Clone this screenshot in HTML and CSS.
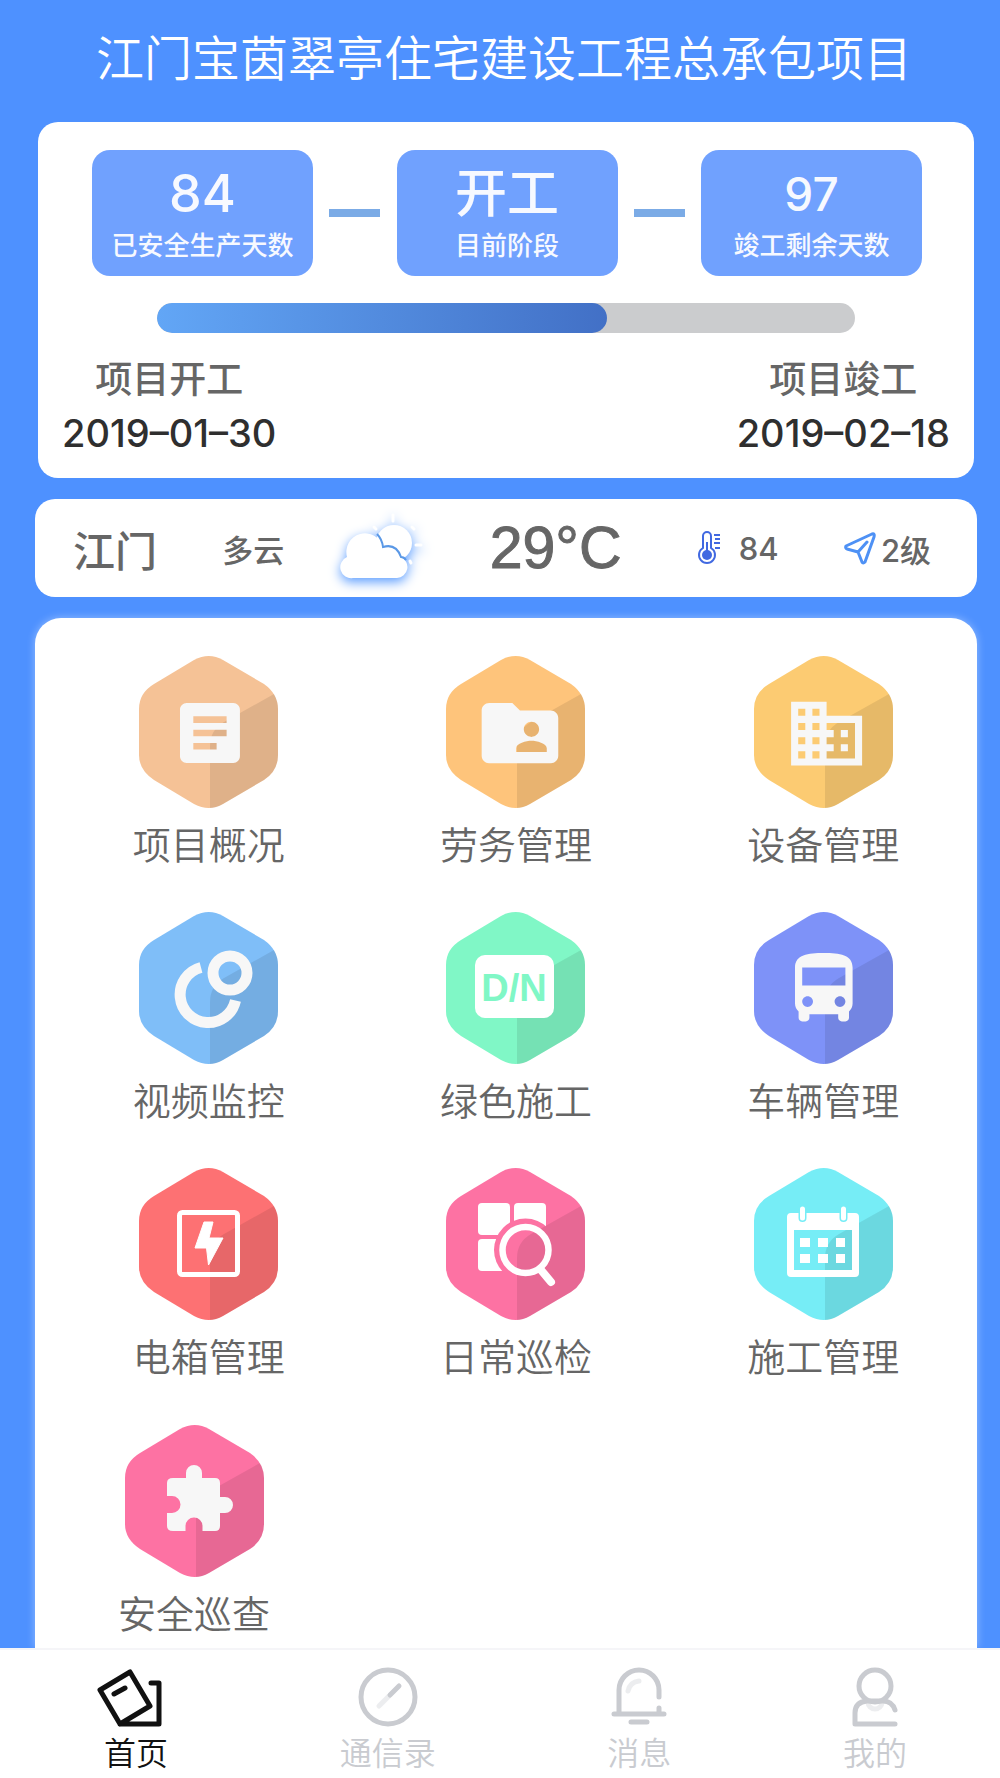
FILE: index.html
```html
<!DOCTYPE html>
<html lang="zh-CN">
<head>
    <meta charset="UTF-8">
    <meta name="viewport" content="width=device-width, initial-scale=1.0">
    <title>江门宝茵翠亭住宅建设工程总承包项目</title>
    <link rel="stylesheet" href="styles.css">
</head>
<body>
    <!-- shared hexagon background for the menu icons -->
    <svg class="defs" width="0" height="0" aria-hidden="true">
        <symbol id="hex" viewBox="0 0 139 152">
            <path fill="currentColor" d="M55 4Q70-4 84 4L125 28Q139 38 139 53V99Q139 115 125 124L84 148Q70 156 55 148L15 124Q0 114 0 99V53Q0 37 15 28Z"/>
            <path fill="#000" fill-opacity=".085" d="M71 152V90Q71 74 85 66L135 38Q139 45 139 53V99Q139 115 125 124L84 148Q78 152 71 152Z"/>
        </symbol>
    </svg>

    <header class="header">
        <h1>江门宝茵翠亭住宅建设工程总承包项目</h1>
    </header>

    <main class="main">
        <section class="card project">
            <div class="stats">
                <div class="stat">
                    <span class="stat-value">84</span>
                    <span class="stat-label">已安全生产天数</span>
                </div>
                <span class="dash"></span>
                <div class="stat">
                    <span class="stat-value">开工</span>
                    <span class="stat-label">目前阶段</span>
                </div>
                <span class="dash"></span>
                <div class="stat">
                    <span class="stat-value small">97</span>
                    <span class="stat-label">竣工剩余天数</span>
                </div>
            </div>
            <progress class="progress" value="64.5" max="100" aria-label="项目进度"></progress>
            <div class="dates">
                <div class="date">
                    <span class="date-label">项目开工</span>
                    <time class="date-value" datetime="2019-01-30">2019–01–30</time>
                </div>
                <div class="date">
                    <span class="date-label">项目竣工</span>
                    <time class="date-value" datetime="2019-02-18">2019–02–18</time>
                </div>
            </div>
        </section>

        <section class="card weather">
            <span class="city">江门</span>
            <span class="sky">多云</span>
            <svg class="cloud" viewBox="13 0 75 72" aria-hidden="true">
                <g class="cloud-shape">
                    <circle cx="58" cy="31" r="18"/>
                    <path class="rays" d="M57 3V9M38 15L40 17M76 15L78 17M80 33H85M74 49L75 51"/>
                    <path d="M17 66A11 11 0 0 1 11 45A18 18 0 0 1 47 35Q60 31 65 45A11 11 0 0 1 61 66Z"/>
                    <path class="edge" d="M41 22Q46 27 47 35Q60 31 65 45Q68 45 70 48"/>
                </g>
            </svg>
            <span class="temp">29°C</span>
            <span class="humidity">
                <svg class="thermo" viewBox="0 0 24 36" aria-hidden="true">
                    <path fill="none" stroke="#4169e1" stroke-width="2" d="M6 18V6a4 4 0 0 1 8 0V18a8 8 0 1 1-8 0Z"/>
                    <path stroke="#4169e1" stroke-width="2" d="M10 12V24M17 5H23M18 9H23M17 13H23M18 18H23"/>
                    <circle cx="10" cy="25" r="5" fill="#4169e1"/>
                </svg>
                84
            </span>
            <span class="wind">
                <svg class="plane" viewBox="0 0 32 34" aria-hidden="true">
                    <path d="M2 15L28 3Q31 2 30 6L21 31Q19 33 18 31L14 21L3 18Q1 17 2 15ZM14 21L23 11"/>
                </svg>
                2级
            </span>
        </section>

        <section class="card menu">
            <div class="menu-grid">
                <a class="menu-item" href="#overview">
                    <svg class="menu-icon peach" viewBox="0 0 139 152" aria-hidden="true">
                        <use href="#hex"/>
                        <path class="glyph" transform="translate(31 37) scale(3.33)" d="M19 3H5c-1.100 0-2 .9-2 2v14c0 1.100.9 2 2 2h14c1.100 0 2-.9 2-2V5c0-1.100-.9-2-2-2zm-5 14H7v-2h7v2zm3-4H7v-2h10v2zm0-4H7V7h10v2z"/>
                    </svg>
                    <span>项目概况</span>
                </a>
                <a class="menu-item" href="#labor">
                    <svg class="menu-icon orange" viewBox="0 0 139 152" aria-hidden="true">
                        <use href="#hex"/>
                        <path class="glyph" transform="translate(28 32) scale(3.83 3.76)" d="M20 6h-8l-2-2H4c-1.100 0-2 .9-2 2v12c0 1.100.9 2 2 2h16c1.100 0 2-.9 2-2V8c0-1.100-.9-2-2-2zm-5 3c1.100 0 2 .9 2 2s-.9 2-2 2-2-.9-2-2 .9-2 2-2zm4 8h-8v-1c0-1.330 2.670-2 4-2s4 .67 4 2v1z"/>
                    </svg>
                    <span>劳务管理</span>
                </a>
                <a class="menu-item" href="#equipment">
                    <svg class="menu-icon yellow" viewBox="0 0 139 152" aria-hidden="true">
                        <use href="#hex"/>
                        <path class="glyph" transform="translate(30 35) scale(3.55)" d="M12 7V3H2v18h20V7H12zM6 19H4v-2h2v2zm0-4H4v-2h2v2zm0-4H4V9h2v2zm0-4H4V5h2v2zm4 12H8v-2h2v2zm0-4H8v-2h2v2zm0-4H8V9h2v2zm0-4H8V5h2v2zm10 12h-8v-2h2v-2h-2v-2h2v-2h-2V9h8v10zm-2-8h-2v2h2v-2zm0 4h-2v2h2v-2z"/>
                    </svg>
                    <span>设备管理</span>
                </a>
                <a class="menu-item" href="#video">
                    <svg class="menu-icon blue" viewBox="0 0 139 152" aria-hidden="true">
                        <use href="#hex"/>
                        <circle class="ring" cx="91" cy="61" r="17"/>
                        <path class="ring" d="M62 55.500A28 28 0 1 0 96.500 88.500"/>
                    </svg>
                    <span>视频监控</span>
                </a>
                <a class="menu-item" href="#green">
                    <svg class="menu-icon green" viewBox="0 0 139 152">
                        <use href="#hex"/>
                        <rect x="29" y="43" width="79" height="63" rx="10" fill="#fff"/>
                        <text class="dn" x="68" y="89" text-anchor="middle">D/N</text>
                    </svg>
                    <span>绿色施工</span>
                </a>
                <a class="menu-item" href="#vehicle">
                    <svg class="menu-icon indigo" viewBox="0 0 139 152" aria-hidden="true">
                        <use href="#hex"/>
                        <path class="glyph" transform="translate(26.600 33.800) scale(3.600)" d="M4 16c0 .88.39 1.670 1 2.220V20c0 .55.45 1 1 1h1c.55 0 1-.45 1-1v-1h8v1c0 .55.45 1 1 1h1c.55 0 1-.45 1-1v-1.780c.61-.55 1-1.340 1-2.220V6c0-3.500-3.580-4-8-4s-8 .5-8 4v10zm3.500 1c-.83 0-1.500-.67-1.500-1.500S6.670 14 7.500 14s1.500.67 1.500 1.500S8.330 17 7.500 17zm9 0c-.83 0-1.500-.67-1.500-1.500s.67-1.500 1.500-1.500 1.500.67 1.500 1.500-.67 1.500-1.500 1.500zm1.500-6H6V6h12v5z"/>
                    </svg>
                    <span>车辆管理</span>
                </a>
                <a class="menu-item" href="#power">
                    <svg class="menu-icon red" viewBox="0 0 139 152" aria-hidden="true">
                        <use href="#hex"/>
                        <rect x="40.500" y="44.500" width="58" height="62" rx="3" fill="none" stroke="#fff" stroke-width="5"/>
                        <path fill="#fff" stroke="#fff" stroke-linejoin="round" d="M65 54H74L70 70H84L69.500 97L67.500 80H56Z"/>
                    </svg>
                    <span>电箱管理</span>
                </a>
                <a class="menu-item" href="#inspection">
                    <svg class="menu-icon pink" viewBox="0 0 139 152" aria-hidden="true">
                        <mask id="lens">
                            <rect width="139" height="152" fill="#fff"/>
                            <circle cx="79.500" cy="82" r="31.500" fill="#000"/>
                        </mask>
                        <use href="#hex"/>
                        <g fill="#fff" mask="url(#lens)">
                            <rect x="32" y="35" width="32" height="32" rx="4"/>
                            <rect x="68" y="35" width="32" height="32" rx="4"/>
                            <rect x="32" y="71" width="32" height="32" rx="4"/>
                        </g>
                        <circle cx="79.500" cy="82" r="23" fill="none" stroke="#fff" stroke-width="6.500"/>
                        <path d="M95 102L105 114" stroke="#fff" stroke-width="8" stroke-linecap="round"/>
                    </svg>
                    <span>日常巡检</span>
                </a>
                <a class="menu-item" href="#construction">
                    <svg class="menu-icon cyan" viewBox="0 0 139 152" aria-hidden="true">
                        <use href="#hex"/>
                        <path fill="#fff" fill-rule="evenodd" d="M37 45H101Q105 45 105 49V105Q105 109 101 109H37Q33 109 33 105V49Q33 45 37 45ZM40 62V102H98V62Z"/>
                        <path fill="#fff" d="M46 70h10v9H46zM64 70h10v9H64zM82 70h9v9H82zM46 86h10v9H46zM64 86h10v9H64zM82 86h9v9H82z"/>
                        <path stroke="currentColor" stroke-width="8" stroke-linecap="round" d="M48.500 42V50M89.500 42V50"/>
                        <path stroke="#fff" stroke-width="5" stroke-linecap="round" d="M48.500 41V50M89.500 41V50"/>
                    </svg>
                    <span>施工管理</span>
                </a>
            </div>
            <div class="menu-more">
                <a class="menu-item" href="#safety">
                    <svg class="menu-icon pink" viewBox="0 0 139 152" aria-hidden="true">
                        <use href="#hex"/>
                        <path class="glyph" d="M48 53H61V48A8 8 0 0 1 77 48V53H90Q95 53 95 58V72H100A8 8 0 0 1 100 88H95V101Q95 106 90 106H77.500V101A8.500 8.500 0 0 0 60.500 101V106H48Q42 106 42 101V88H47A8.500 8.500 0 0 0 47 71H42V58Q42 53 48 53Z"/>
                    </svg>
                    <span>安全巡查</span>
                </a>
            </div>
        </section>
    </main>

    <nav class="tabbar">
        <a class="tab active" href="#home">
            <svg class="tab-icon" viewBox="7 0 64 60" aria-hidden="true">
                <path d="M3 23L33 5L53 39L23 57ZM23 57H62V16H54M17 27L28 21"/>
            </svg>
            <span>首页</span>
        </a>
        <a class="tab" href="#contacts">
            <svg class="tab-icon" viewBox="0 0 64 60" aria-hidden="true">
                <circle cx="32" cy="30" r="27"/>
                <path class="faint" d="M23 39L33 29"/>
                <path d="M34 28L43 19"/>
            </svg>
            <span>通信录</span>
        </a>
        <a class="tab" href="#messages">
            <svg class="tab-icon" viewBox="0 0 64 60" aria-hidden="true">
                <path d="M12 46V23A20 20 0 0 1 52 23V30M52 41V46M7 47H57M24 55H40"/>
                <path class="faint" d="M21 24Q23 15 32 14"/>
            </svg>
            <span>消息</span>
        </a>
        <a class="tab" href="#mine">
            <svg class="tab-icon" viewBox="0 0 64 60" aria-hidden="true">
                <path class="faint" d="M25 35A7 7 0 1 0 39 35"/>
                <circle cx="32" cy="19" r="16"/>
                <path d="M52 43Q49 34 40 34H24Q12 35 12 46V57H52"/>
            </svg>
            <span>我的</span>
        </a>
    </nav>
</body>
</html>
```

FILE: styles.css
```css
* {
    box-sizing: border-box;
}
body {
    margin: 0;
    min-height: 100vh;
    display: flex;
    flex-direction: column;
    font-family: "Liberation Sans", "Noto Sans CJK SC", sans-serif;
    background-color: #4e91ff;
    color: #666;
}
a {
    color: inherit;
    text-decoration: none;
}
.defs {
    position: absolute;
}

.header {
    padding: 19px 20px 31px 28px;
    text-align: center;
}
.header h1 {
    margin: 0;
    font-family: "Noto Sans CJK SC", sans-serif;
    font-size: 48px;
    font-weight: 350;
    line-height: 72px;
    color: #fff;
}

.main {
    flex: 1;
    display: flex;
    flex-direction: column;
    gap: 21px;
    padding: 0 23px 0 35px;
}
.card {
    background-color: #fff;
    border-radius: 20px;
}

/* project progress */
.project {
    margin: 0 3px;
    padding: 28px 24px 17px;
}
.stats {
    display: flex;
    align-items: center;
    justify-content: space-between;
    padding: 0 28px 0 30px;
}
.stat {
    display: flex;
    flex-direction: column;
    align-items: center;
    width: 221px;
    height: 126px;
    padding-top: 12px;
    border-radius: 18px;
    background-color: #70a1fe;
    color: #f7f9ff;
}
.stat-value {
    font-family: Inter, "Noto Sans CJK SC", sans-serif;
    font-size: 52px;
    font-weight: 500;
    line-height: 64px;
}
.stat-value.small {
    font-size: 46px;
}
.stat-label {
    font-size: 26px;
    font-weight: 500;
    line-height: 40px;
}
.dash {
    width: 51px;
    height: 8px;
    background-color: #7babe6;
}
.progress {
    display: block;
    width: calc(100% - 190px);
    height: 30px;
    margin: 27px auto 24px;
    border: none;
    border-radius: 15px;
    background-color: #cbccce;
    overflow: hidden;
    appearance: none;
}
.progress::-webkit-progress-bar {
    background-color: #cbccce;
}
.progress::-webkit-progress-value {
    border-radius: 15px;
    background: linear-gradient(to right, #62a6f6, #4270c6);
}
.dates {
    display: flex;
    justify-content: space-between;
}
.date {
    display: flex;
    flex-direction: column;
    align-items: center;
}
.date-label {
    font-size: 37px;
    font-weight: 500;
    line-height: 48px;
}
.date-value {
    font-family: Inter, sans-serif;
    font-size: 38px;
    font-weight: 500;
    line-height: 56px;
    color: #2f2f2f;
}

/* weather */
.weather {
    display: flex;
    align-items: center;
    justify-content: space-between;
    height: 98px;
    padding: 0 46px 0 38px;
}
.city {
    font-size: 42px;
    font-weight: 500;
}
.sky {
    font-size: 31px;
    font-weight: 500;
}
.cloud {
    width: 75px;
    height: 72px;
    overflow: visible;
}
.cloud-shape {
    fill: #fff;
    filter: drop-shadow(0 4px 6px #5a9cff);
}
.rays {
    stroke: #fff;
    stroke-width: 3;
    stroke-linecap: round;
}
.edge {
    fill: none;
    stroke: #5a98e6;
    stroke-width: 2;
}
.temp {
    margin-right: 10px;
    font-size: 59px;
    -webkit-text-stroke: 1px #666;
}
.humidity, .wind {
    display: flex;
    align-items: center;
    font-family: Inter, "Noto Sans CJK SC", sans-serif;
    font-size: 31px;
    font-weight: 500;
}
.humidity {
    gap: 18px;
}
.wind {
    gap: 5px;
}
.thermo {
    width: 24px;
    height: 36px;
}
.plane {
    width: 32px;
    height: 34px;
    fill: none;
    stroke: #4e91f5;
    stroke-width: 3;
    stroke-linejoin: round;
    stroke-linecap: round;
}

/* menu */
.menu {
    flex: 1;
    padding: 38px 0 8px 20px;
    border-radius: 26px 26px 0 0;
    box-shadow: 0 0 8px rgba(255, 255, 255, 0.4);
}
.menu-grid {
    display: grid;
    grid-template-columns: repeat(3, 1fr);
    row-gap: 42px;
}
.menu-more {
    display: flex;
    margin-top: 43px;
    padding-left: 63px;
}
.menu-item {
    display: flex;
    flex-direction: column;
    align-items: center;
    gap: 8px;
    font-family: "Noto Sans CJK SC", sans-serif;
    font-size: 38px;
    font-weight: 350;
    line-height: 54px;
}
.menu-icon {
    width: 139px;
    height: 152px;
}
.peach { color: #f5c296; }
.orange { color: #fec47b; }
.yellow { color: #fccb72; }
.blue { color: #7fbef8; }
.green { color: #80f7c6; }
.indigo { color: #7e92f8; }
.red { color: #fd7173; }
.pink { color: #fd72a3; }
.cyan { color: #76edf6; }
.glyph {
    fill: #f7f7f7;
}
.ring {
    fill: none;
    stroke: #f7f7f7;
    stroke-width: 11;
}
.dn {
    font-family: "Liberation Sans", sans-serif;
    font-size: 38px;
    font-weight: bold;
    fill: #80f7c6;
}

/* bottom tabs */
.tabbar {
    display: flex;
    justify-content: space-between;
    height: 130px;
    padding: 17px 93px 0 104px;
    border-top: 2px solid #f5f5f8;
    background-color: #fff;
}
.tab {
    display: flex;
    flex-direction: column;
    align-items: center;
    font-family: "Noto Sans CJK SC", sans-serif;
    font-size: 32px;
    font-weight: 350;
    line-height: 48px;
    color: #c9cbd0;
}
.tab.active {
    color: #111;
}
.tab-icon {
    width: 64px;
    height: 60px;
    fill: none;
    stroke: currentColor;
    stroke-width: 5;
    stroke-linecap: round;
    stroke-linejoin: round;
    overflow: visible;
}
.faint {
    opacity: 0.35;
}
```
